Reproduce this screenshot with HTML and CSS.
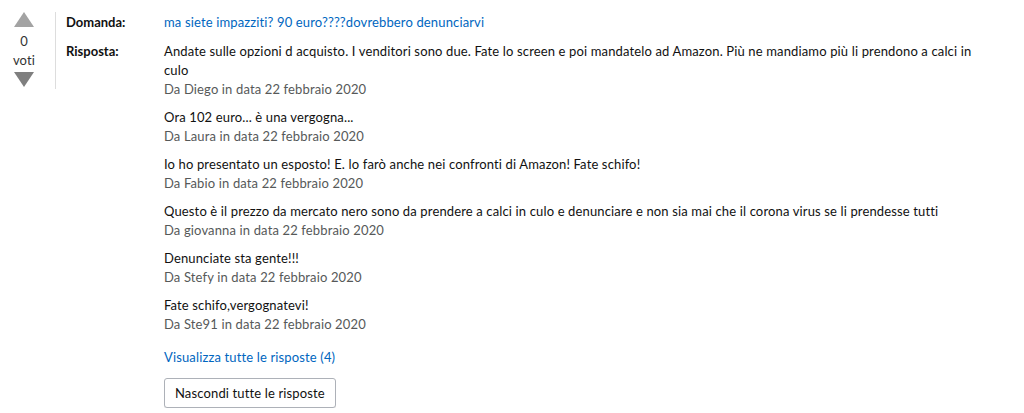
FILE: index.html
```html
<!DOCTYPE html>
<html lang="it">
<head>
    <meta charset="UTF-8">
    <title>Domande e risposte</title>
    <link rel="stylesheet" href="styles.css">
</head>
<body>
    <div class="qa">
        <div class="vote">
            <span class="arrow up"></span>
            <span class="count">0</span>
            <span class="label">voti</span>
            <span class="arrow down"></span>
        </div>
        <div class="content">
            <div class="row">
                <div class="key">Domanda:</div>
                <div class="val"><a href="#" class="link">ma siete impazziti? 90 euro????dovrebbero denunciarvi</a></div>
            </div>
            <div class="row answer-row">
                <div class="key">Risposta:</div>
                <div class="val">
                    <div class="answer">
                        <p>Andate sulle opzioni d acquisto. I venditori sono due. Fate lo screen e poi mandatelo ad Amazon. Più ne mandiamo più li prendono a calci in culo</p>
                        <p class="by">Da Diego in data 22 febbraio 2020</p>
                    </div>
                    <div class="answer">
                        <p>Ora 102 euro... è una vergogna...</p>
                        <p class="by">Da Laura in data 22 febbraio 2020</p>
                    </div>
                    <div class="answer">
                        <p>Io ho presentato un esposto! E. lo farò anche nei confronti di Amazon! Fate schifo!</p>
                        <p class="by">Da Fabio in data 22 febbraio 2020</p>
                    </div>
                    <div class="answer">
                        <p>Questo è il prezzo da mercato nero sono da prendere a calci in culo e denunciare e non sia mai che il corona virus se li prendesse tutti</p>
                        <p class="by">Da giovanna in data 22 febbraio 2020</p>
                    </div>
                    <div class="answer">
                        <p>Denunciate sta gente!!!</p>
                        <p class="by">Da Stefy in data 22 febbraio 2020</p>
                    </div>
                    <div class="answer">
                        <p>Fate schifo,vergognatevi!</p>
                        <p class="by">Da Ste91 in data 22 febbraio 2020</p>
                    </div>
                    <a href="#" class="link more">Visualizza tutte le risposte (4)</a>
                    <button class="btn">Nascondi tutte le risposte</button>
                </div>
            </div>
        </div>
    </div>
</body>
</html>
```

FILE: styles.css
```css
body {
    margin: 0;
    background: #fff;
    font: 13px/19px Lato, "Open Sans", Arial, sans-serif;
    letter-spacing: 0.14px;
    color: #111;
}
p {
    margin: 0;
}
.qa {
    display: flex;
    align-items: flex-start;
    padding: 12px 0 0 14px;
}
.vote {
    display: flex;
    flex-direction: column;
    align-items: center;
    width: 20px;
    padding-right: 21px;
    border-right: 1px solid #ddd;
    color: #333;
}
.arrow {
    width: 0;
    height: 0;
    border-left: 10px solid transparent;
    border-right: 10px solid transparent;
}
.arrow.up {
    border-bottom: 15px solid #a3a3a3;
}
.arrow.down {
    border-top: 15px solid #7f7f7f;
    margin-top: 2px;
    margin-bottom: 2px;
}
.count {
    margin-top: 5px;
}
.content {
    padding: 1px 0 0 10px;
    width: 918px;
}
.row {
    display: flex;
}
.key {
    width: 98px;
    flex: none;
    font-weight: bold;
    letter-spacing: 0;
}
.val {
    flex: 1;
}
.answer-row {
    margin-top: 10px;
}
.answer {
    margin-bottom: 9px;
}
.by {
    color: #565959;
}
.link {
    color: #0066c0;
    text-decoration: none;
}
.more {
    display: block;
    margin-top: 14px;
}
.btn {
    display: block;
    margin-top: 11px;
    height: 30px;
    padding: 0 10px;
    font: inherit;
    letter-spacing: 0.14px;
    color: #111;
    background: #fff;
    border: 1px solid #adb1b8;
    border-radius: 3px;
    box-shadow: 0 1px 0 rgba(0, 0, 0, 0.08);
}
```
